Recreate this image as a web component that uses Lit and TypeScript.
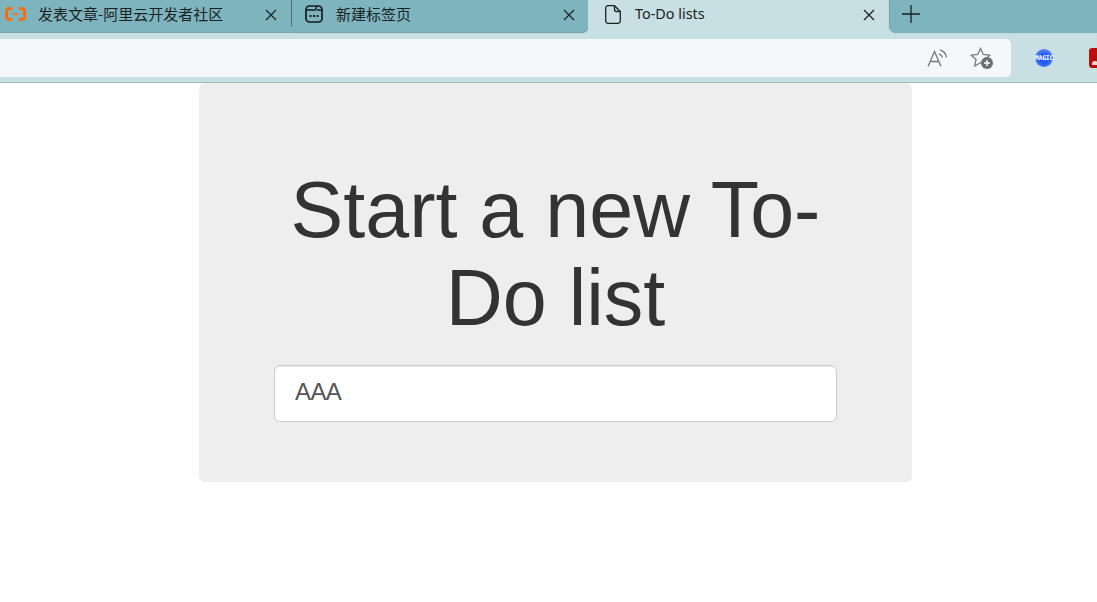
import { LitElement, html, css } from 'lit';
import { customElement } from 'lit/decorators.js';

const closeIcon = html`<svg class="close" width="12" height="12" viewBox="0 0 12 12"><path d="M1 1l10 10M11 1L1 11" stroke="#1c2526" stroke-width="1.3" fill="none"/></svg>`;

@customElement('app-root')
export class AppRoot extends LitElement {
  static styles = css`
    :host {
      display: block;
      height: 602px;
      overflow: hidden;
      background: #fff;
      font-family: "Liberation Sans", Arial, sans-serif;
    }
    .tabstrip {
      display: flex;
      height: 39px;
      background: #c8dfe3;
    }
    .tab {
      display: flex;
      align-items: flex-start;
      height: 33px;
      box-sizing: border-box;
      background: #7eb4be;
      border-bottom: 1px solid #76a8b2;
      font: 15px "Noto Sans CJK SC", sans-serif;
      color: #1a2224;
      flex: none;
    }
    .tab span { line-height: 27px; white-space: nowrap; flex: 1; }
    .tab svg { flex: none; }
    .close { margin-top: 9px; }
    .first { width: 291px; padding-left: 5px; }
    .first .favicon { margin: 7px 12px 0 0; }
    .first .close { margin-right: 14px; }
    .sep {
      width: 1px;
      height: 33px;
      flex: none;
      box-sizing: border-box;
      background: linear-gradient(#49707a 0 27px, #7eb4be 27px);
    }
    .second {
      width: 296px;
      padding-left: 13px;
      border-radius: 0 0 7px 0;
      box-shadow: 1px 0 1px #6fa0aa;
    }
    .second .favicon { margin: 5px 13px 0 0; }
    .second .close { margin-right: 13px; }
    .active {
      width: 302px;
      height: 39px;
      padding-left: 17px;
      background: #c8dfe3;
      border: none;
      font: 14.4px "Noto Sans", sans-serif;
    }
    .active span { line-height: 28px; }
    .active .favicon { margin: 5px 14px 0 0; }
    .active .close { margin-right: 15px; }
    .rest {
      flex: 1;
      height: 33px;
      background: #7eb4be;
      border-radius: 0 0 0 7px;
      padding: 5px 0 0 12px;
      box-shadow: -1px 0 1px #6fa0aa;
      box-sizing: border-box;
    }
    .toolbar {
      display: flex;
      align-items: flex-start;
      height: 44px;
      box-sizing: border-box;
      background: #c8dfe3;
      border-bottom: 1px solid #9dbabd;
    }
    .address {
      display: flex;
      flex: none;
      align-items: center;
      justify-content: flex-end;
      width: 1011px;
      height: 38px;
      box-sizing: border-box;
      background: #f5f8fa;
      border-radius: 0 5px 5px 0;
      padding-right: 17px;
      gap: 21px;
    }
    .ext {
      display: flex;
      flex: none;
      align-items: center;
      height: 38px;
      padding-left: 24px;
      gap: 36px;
    }
    .magic {
      position: relative;
      width: 18px;
      height: 18px;
      border-radius: 50%;
      background: radial-gradient(circle at 50% 55%, #1f5cf5 0 35%, #4f7bf7 65%, #8f8ff5 100%);
      flex: none;
    }
    .magic i {
      position: absolute;
      left: -1px;
      top: 5px;
      width: 20px;
      font: bold 6.5px/8px "DejaVu Sans Mono", monospace;
      font-style: normal;
      color: #fff;
      text-align: center;
      letter-spacing: -0.2px;
    }
    .pdf {
      position: relative;
      width: 16px;
      height: 20px;
      border-radius: 3px;
      background: #b80f0a;
      flex: none;
    }
    .pdf::after {
      content: "";
      position: absolute;
      left: 3px;
      top: 13px;
      width: 6px;
      height: 4px;
      border-radius: 3px 3px 0 0;
      background: #f3d9d6;
    }
    main { padding-left: 199px; }
    .jumbotron {
      width: 713px;
      height: 399px;
      box-sizing: border-box;
      padding: 83px 75px 0;
      background: #eee;
      border-radius: 6px;
      color: #333;
    }
    h1 {
      margin: 0 0 23px;
      font: 400 79px/88px "Liberation Sans", Arial, sans-serif;
      text-align: center;
    }
    input {
      display: block;
      width: 100%;
      height: 57px;
      box-sizing: border-box;
      padding: 0 20px 3px;
      font: 24px "Liberation Sans", Arial, sans-serif;
      letter-spacing: -0.6px;
      color: #555;
      background: #fff;
      border: 1px solid #ccc;
      border-radius: 6px;
      box-shadow: inset 0 1px 1px rgba(0,0,0,0.075);
      outline: none;
    }
  `;

  render() {
    return html`
      <div class="tabstrip">
        <div class="tab first">
          <svg class="favicon" width="21" height="14" viewBox="0 0 21 14">
            <path d="M7 1.500H4.500Q1.500 1.500 1.500 4.500v5Q1.500 12.500 4.500 12.500H7M14 1.500h2.500q3 0 3 3v5q0 3-3 3H14" fill="none" stroke="#f4700f" stroke-width="3"/>
            <path d="M7.500 7h6" stroke="#f4700f" stroke-width="1.600"/>
          </svg>
          <span>发表文章-阿里云开发者社区</span>
          ${closeIcon}
        </div>
        <div class="sep"></div>
        <div class="tab second">
          <svg class="favicon" width="18" height="18" viewBox="0 0 18 18" fill="none" stroke="#151c1e" stroke-width="1.700">
            <rect x="1" y="1" width="16" height="16" rx="3.500"/>
            <path d="M1 5h9.500l1.500-4M12 5h5" stroke-width="1.300"/>
            <path d="M4.500 11h2M8 11h2M11.500 11h2" stroke-width="2"/>
          </svg>
          <span>新建标签页</span>
          ${closeIcon}
        </div>
        <div class="tab active">
          <svg class="favicon" width="16" height="19" viewBox="0 0 16 19" fill="none" stroke="#1a2224" stroke-width="1.300">
            <path d="M3 .7h6.500L15.300 6.500V16a2.300 2.300 0 0 1-2.300 2.300H3A2.300 2.300 0 0 1 .7 16V3A2.300 2.300 0 0 1 3 .7z"/>
            <path d="M9.500.7V4.500a2 2 0 0 0 2 2h3.800"/>
          </svg>
          <span>To-Do lists</span>
          ${closeIcon}
        </div>
        <div class="rest">
          <svg width="18" height="18" viewBox="0 0 18 18"><path d="M9 0v18M0 9h18" stroke="#1a2224" stroke-width="1.300"/></svg>
        </div>
      </div>
      <div class="toolbar">
        <div class="address">
          <svg width="22" height="20" viewBox="0 0 22 20" fill="none" stroke="#77797b" stroke-width="1.300">
            <path d="M1 18.500L7.500 3.500 14 18.500M3.300 13.500h8.400"/>
            <path d="M12 6a5 5 0 0 1 3.500 3.500M13 2a9 9 0 0 1 6.500 7.500"/>
          </svg>
          <svg width="24" height="22" viewBox="0 0 24 22">
            <path d="M10.500 1.500l2.800 6 6.500.7-4.800 4.400 1.300 6.500-5.800-3.300-5.800 3.300 1.300-6.500L1.200 8.200l6.500-.7z" fill="none" stroke="#77797b" stroke-width="1.300"/>
            <circle cx="17" cy="16" r="6" fill="#6b6e70"/>
            <path d="M14 16h6M17 13v6" stroke="#fff" stroke-width="1.400"/>
          </svg>
        </div>
        <div class="ext">
          <div class="magic"><i>MAGIC</i></div>
          <div class="pdf"></div>
        </div>
      </div>
      <main>
        <div class="jumbotron">
          <h1>Start a new To-Do list</h1>
          <input type="text" .value=${'AAA'} />
        </div>
      </main>
    `;
  }
}

declare global {
  interface HTMLElementTagNameMap { 'app-root': AppRoot; }
}
